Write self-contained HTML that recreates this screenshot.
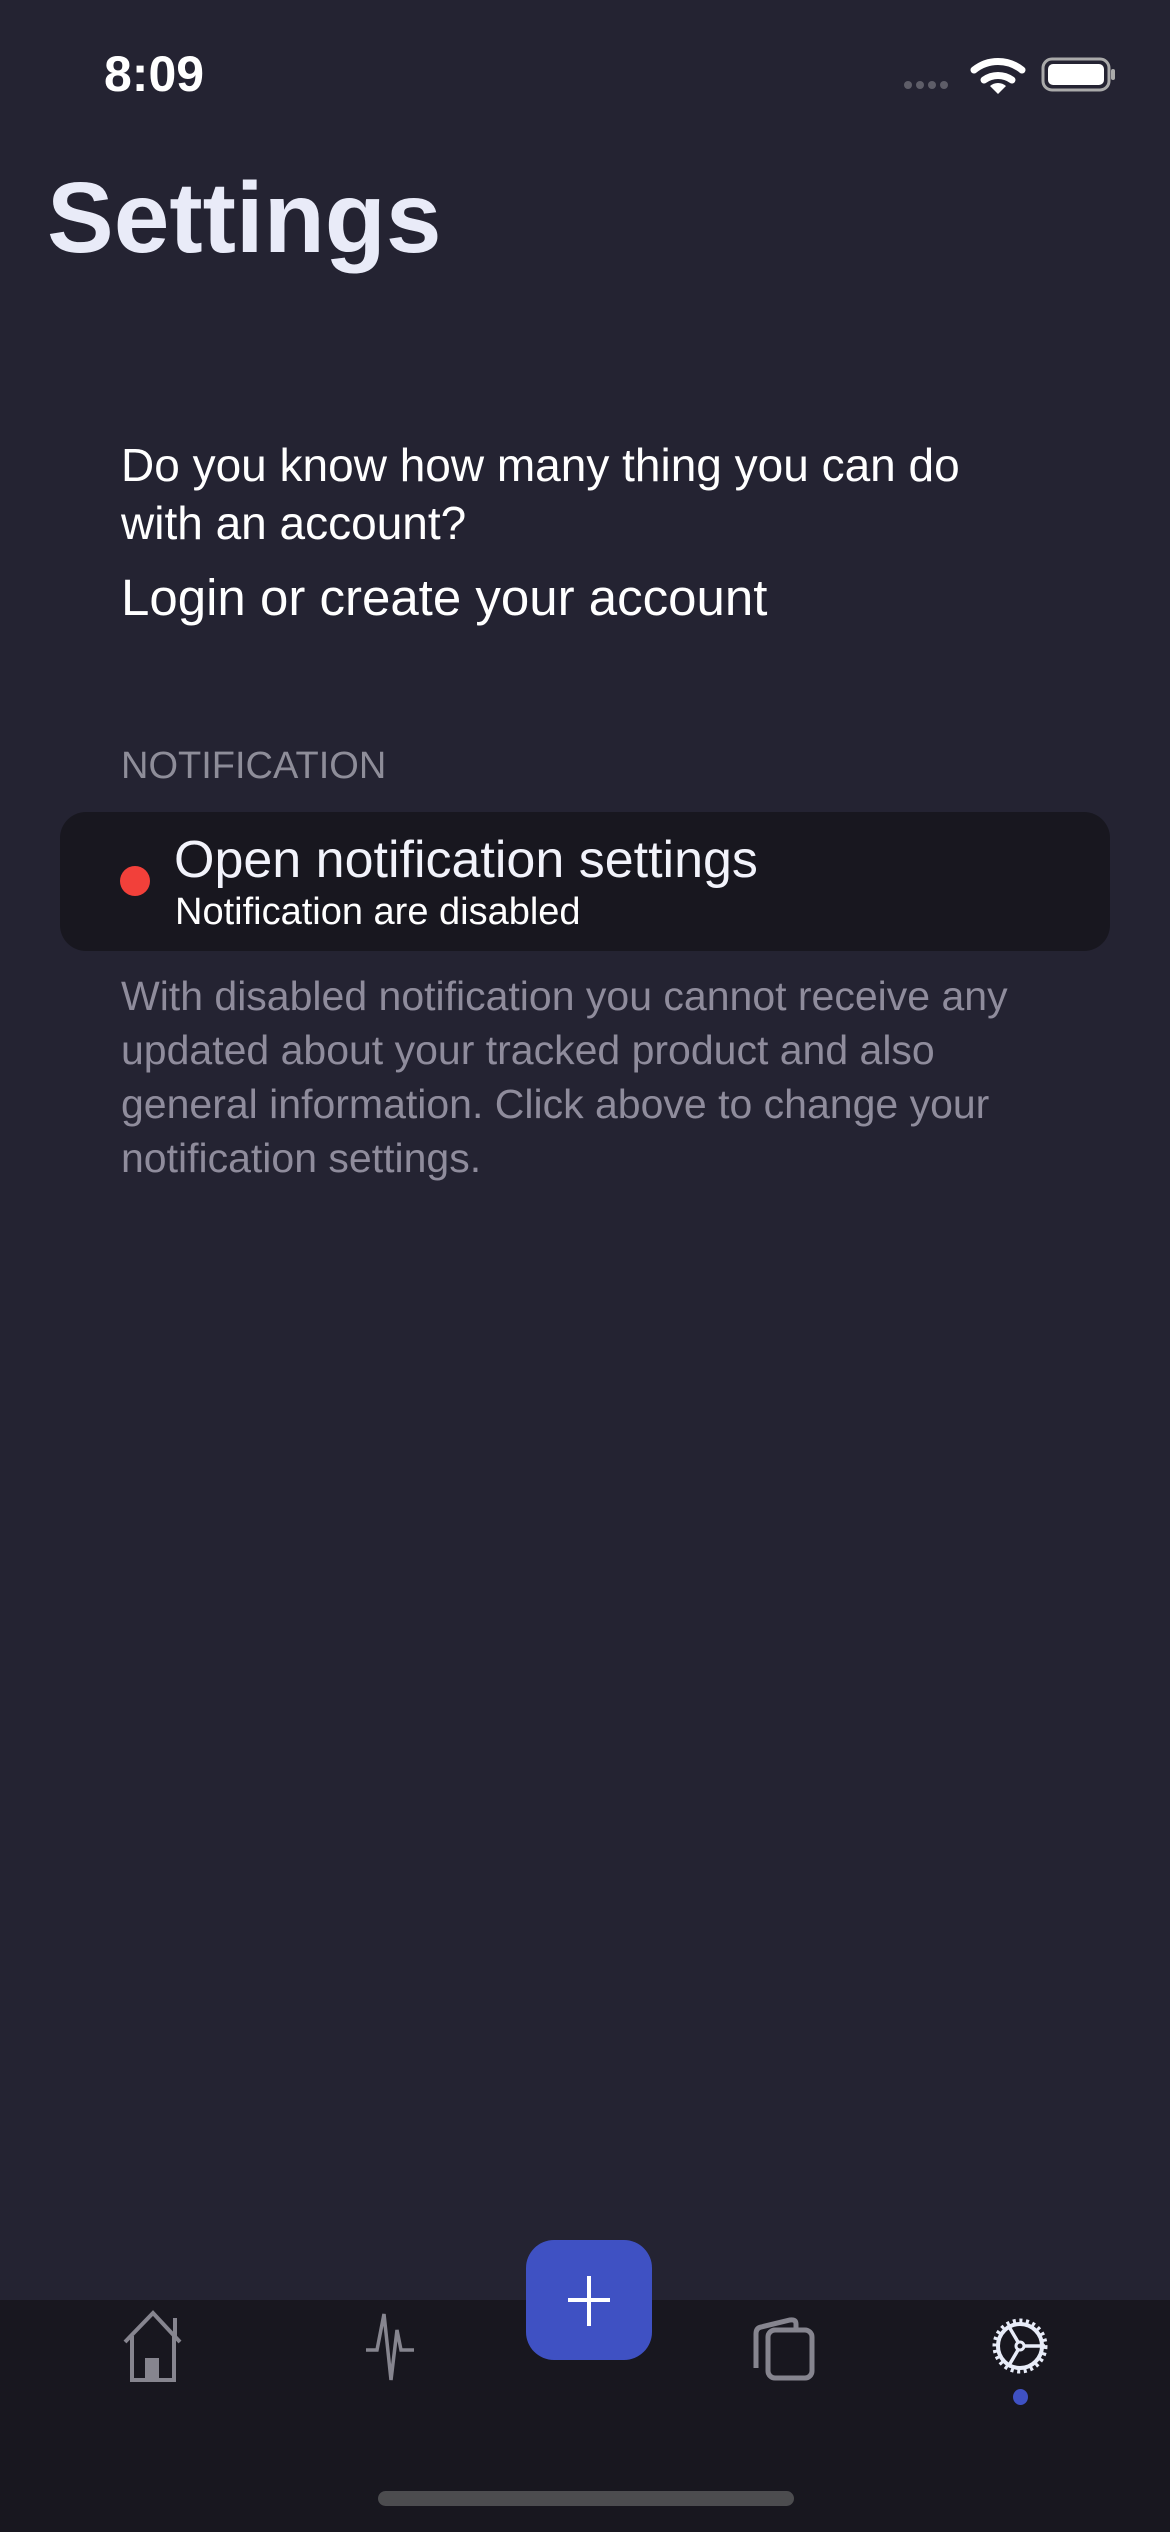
<!DOCTYPE html>
<html><head><meta charset="utf-8"><style>
*{margin:0;padding:0;box-sizing:border-box}
body{width:1170px;height:2532px;background:#242332;font-family:"Liberation Sans",sans-serif;position:relative;overflow:hidden;color:#fff}
.a{position:absolute;white-space:nowrap}
</style></head><body>
<div class="a" style="left:104px;top:45px;font-size:50px;font-weight:bold;color:#fff">8:09</div>
<svg class="a" style="left:900px;top:52px" width="220" height="44" viewBox="0 0 220 44">
<g fill="#5e5d68"><circle cx="8" cy="33" r="4"/><circle cx="20" cy="33" r="4"/><circle cx="32" cy="33" r="4"/><circle cx="44" cy="33" r="4"/></g>
<path d="M74 12 A38 38 0 0 1 122 12" stroke="#fff" stroke-width="7" fill="none" stroke-linecap="round" transform="translate(0,6)"/>
<path d="M84 28 A24 24 0 0 1 112 28" stroke="#fff" stroke-width="7" fill="none" stroke-linecap="round"/>
<path d="M98 42 L90 34 A12 12 0 0 1 106 34 Z" fill="#fff"/>
<rect x="143" y="7" width="66" height="31" rx="9" stroke="#aaa" stroke-width="3" fill="none"/>
<rect x="148" y="12" width="56" height="21" rx="5" fill="#fff"/>
<rect x="211" y="17" width="4" height="11" rx="2" fill="#aaa"/>
</svg>
<div class="a" style="left:47px;top:160px;font-size:100px;font-weight:bold;color:#e9ebf8;line-height:116px">Settings</div>
<div class="a" style="left:121px;top:436px;font-size:46px;line-height:58px;color:#fff">Do you know how many thing you can do<br>with an account?</div>
<div class="a" style="left:121px;top:568px;font-size:51px;color:#fff">Login or create your account</div>
<div class="a" style="left:121px;top:745px;font-size:38px;color:#8e8d99">NOTIFICATION</div>
<div class="a" style="left:60px;top:812px;width:1050px;height:139px;background:#18171f;border-radius:26px"></div>
<div class="a" style="left:120px;top:866px;width:30px;height:30px;border-radius:50%;background:#f2403a"></div>
<div class="a" style="left:174px;top:830px;font-size:52px;color:#f2f3fb">Open notification settings</div>
<div class="a" style="left:175px;top:891px;font-size:38px;color:#fff">Notification are disabled</div>
<div class="a" style="left:121px;top:969px;font-size:41px;line-height:54px;color:#8f8c9c">With disabled notification you cannot receive any<br>updated about your tracked product and also<br>general information. Click above to change your<br>notification settings.</div>
<div class="a" style="left:0;top:2300px;width:1170px;height:232px;background:#18171f"></div>
<div class="a" style="left:526px;top:2240px;width:126px;height:120px;border-radius:28px;background:#3f51c3"></div>
<svg class="a" style="left:562px;top:2270px" width="54" height="60"><path d="M27 6V56M6 30H48" stroke="#fff" stroke-width="4"/></svg>
<svg class="a" style="left:120px;top:2310px" width="66" height="76" viewBox="0 0 66 76" fill="none" stroke="#86858f" stroke-width="4">
<path d="M5 32 L33 3 L60 32"/><path d="M55 8V26"/><path d="M12 26V70H54V26"/><rect x="25" y="48" width="14" height="22" fill="#86858f" stroke="none"/></svg>
<svg class="a" style="left:364px;top:2310px" width="56" height="76" viewBox="0 0 56 76" fill="none" stroke="#86858f" stroke-width="3.5">
<path d="M2 40H13L20 4L27 70L33 20L37 40H50"/></svg>
<svg class="a" style="left:748px;top:2310px" width="72" height="72" viewBox="0 0 72 72" fill="none" stroke="#86858f" stroke-width="5">
<path d="M8 58V24Q8 18 13 17L42 10Q48 9 48 14V18"/><rect x="20" y="20" width="44" height="48" rx="7"/></svg>
<svg class="a" style="left:988px;top:2308px" width="64" height="78" viewBox="0 0 64 78" fill="none" stroke="#e8ecf8">
<circle cx="32" cy="38" r="25" stroke-width="5" stroke-dasharray="3 3.5"/><circle cx="32" cy="38" r="22" stroke-width="4"/>
<circle cx="32" cy="38" r="4" stroke-width="3"/><path d="M36 38H57M30 34L20 17M30 42L20 59" stroke-width="3.5"/></svg>
<div class="a" style="left:1013px;top:2389px;width:15px;height:16px;border-radius:50%;background:#3f51c3"></div>
<div class="a" style="left:378px;top:2491px;width:416px;height:15px;border-radius:8px;background:#4c4c4f"></div>
</body></html>
